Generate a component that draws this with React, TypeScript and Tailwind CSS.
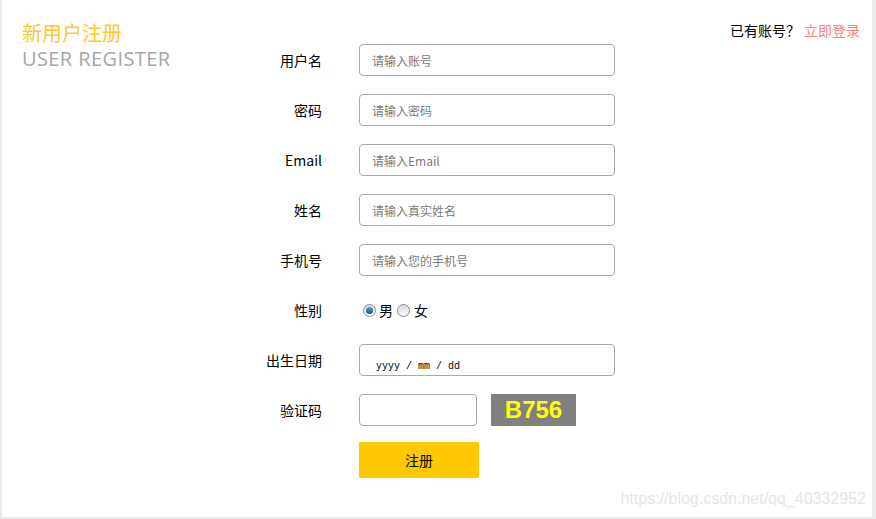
import * as React from 'react';

const cjk = { fontFamily: '"Noto Sans CJK SC", "Noto Sans", sans-serif' };

function Radio({ checked }: { checked?: boolean }) {
  return (
    <span className="flex h-[13px] w-[13px] items-center justify-center rounded-full border border-[#8a8a8a] bg-gradient-to-b from-[#d8d8d8] to-[#fbfbfb]">
      {checked && (
        <span className="h-[7px] w-[7px] rounded-full bg-gradient-to-b from-[#4fa3e0] to-[#0b4f8f]" />
      )}
    </span>
  );
}

function Field({ label, placeholder }: { label: string; placeholder: string }) {
  return (
    <div className="flex h-[50px] items-start">
      <label className="flex h-[32px] w-[62px] items-center justify-end text-[14px] text-black">{label}</label>
      <input
        className="ml-[37px] h-[32px] w-[256px] rounded-[4px] border border-[#a9a9a9] bg-white pl-[12px] text-[12px] outline-none placeholder:text-[#7a7a7a]"
        style={cjk}
        placeholder={placeholder}
      />
    </div>
  );
}

export default function App() {
  return (
    <div
      className="relative flex h-[519px] w-[876px] overflow-hidden border-b-2 border-l-2 border-r-4 border-[#ececec] bg-white"
      style={cjk}
    >
      <div className="w-[258px] shrink-0 pl-[20px] pt-[20px]">
        <div className="text-[20px] leading-[26px] text-[#ffc926]">新用户注册</div>
        <div
          className="text-[20px] leading-[26px] tracking-[0.4px] text-[#a6a6a6]"
          style={{ fontFamily: '"Open Sans", "Noto Sans", sans-serif' }}
        >
          USER REGISTER
        </div>
      </div>

      <div className="w-[360px] shrink-0 pt-[44px]">
        <Field label="用户名" placeholder="请输入账号" />
        <Field label="密码" placeholder="请输入密码" />
        <Field label="Email" placeholder="请输入Email" />
        <Field label="姓名" placeholder="请输入真实姓名" />
        <Field label="手机号" placeholder="请输入您的手机号" />

        <div className="flex h-[50px] items-start">
          <span className="flex h-[32px] w-[62px] items-center justify-end text-[14px] text-black">性别</span>
          <div className="ml-[41px] flex h-[32px] items-center text-[14px] text-black">
            <Radio checked />
            <span className="ml-[3px]">男</span>
            <span className="ml-[4px]"><Radio /></span>
            <span className="ml-[4px]">女</span>
          </div>
        </div>

        <div className="flex h-[50px] items-start">
          <span className="flex h-[32px] w-[62px] items-center justify-end text-[14px] text-black">出生日期</span>
          <div
            className="ml-[37px] h-[32px] w-[256px] rounded-[4px] border border-[#a9a9a9] bg-white pl-[16px] pt-[16px] text-[10px] leading-[12px] text-black"
            style={{ fontFamily: '"Liberation Mono", monospace' }}
          >
            yyyy / mm / dd
          </div>
        </div>

        <div className="flex h-[48px] items-start">
          <span className="flex h-[32px] w-[62px] items-center justify-end text-[14px] text-black">验证码</span>
          <input className="ml-[37px] h-[32px] w-[118px] rounded-[4px] border border-[#a9a9a9] bg-white outline-none" />
          <div
            className="ml-[14px] flex h-[32px] w-[85px] items-center justify-center bg-[#808080] text-[24px] font-bold text-[#ffff00]"
            style={{ fontFamily: '"Liberation Sans", Arial, sans-serif' }}
          >
            B756
          </div>
        </div>

        <button className="ml-[99px] h-[36px] w-[120px] bg-[#ffc800] text-[14px] text-black">注册</button>
      </div>

      <div className="flex-1 pr-[12px] pt-[20px] text-right text-[14px] leading-[20px]">
        <span className="text-black">已有账号？</span>
        <span className="ml-[4px] text-[#ff8080]">立即登录</span>
      </div>

      <div
        className="absolute bottom-[6px] right-[6px] text-[16px] text-[#e6e6e6]"
        style={{ fontFamily: '"Liberation Sans", Arial, sans-serif' }}
      >
        https://blog.csdn.net/qq_40332952
      </div>
    </div>
  );
}
